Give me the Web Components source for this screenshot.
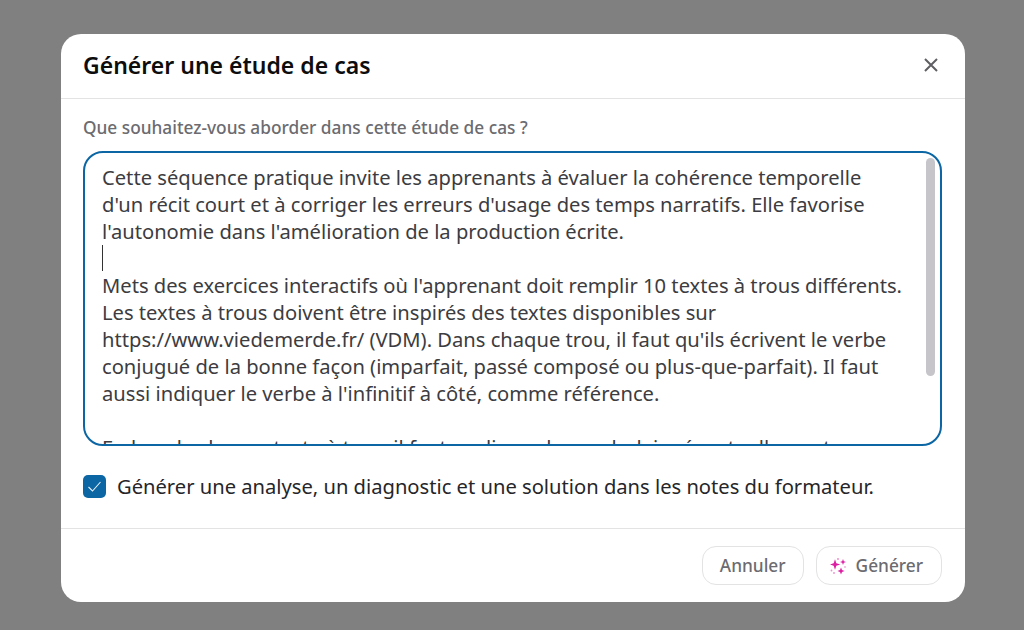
<!DOCTYPE html>
<html lang="fr">
<head>
<meta charset="utf-8">
<title>Générer une étude de cas</title>
<style>
    html, body { margin: 0; height: 100%; }
    body { font-family: "Noto Sans", sans-serif; background: #808080; overflow: hidden; }
</style>
</head>
<body>
<case-dialog>
    <span slot="title">Générer une étude de cas</span>
    <prompt-box label="Que souhaitez-vous aborder dans cette étude de cas ?">Cette séquence pratique invite les apprenants à évaluer la cohérence temporelle
d'un récit court et à corriger les erreurs d'usage des temps narratifs. Elle favorise
l'autonomie dans l'amélioration de la production écrite.
<span class="caret"></span>
Mets des exercices interactifs où l'apprenant doit remplir 10 textes à trous différents.
Les textes à trous doivent être inspirés des textes disponibles sur
https://www.viedemerde.fr/ (VDM). Dans chaque trou, il faut qu'ils écrivent le verbe
conjugué de la bonne façon (imparfait, passé composé ou plus-que-parfait). Il faut
aussi indiquer le verbe à l'infinitif à côté, comme référence.

En bas de chaque texte à trou, il faut expliquer le vocabulaire éventuellement</prompt-box>
    <check-row>Générer une analyse, un diagnostic et une solution dans les notes du formateur.</check-row>
    <action-button slot="actions">Annuler</action-button>
    <action-button slot="actions" sparkle>Générer</action-button>
</case-dialog>

<script>
class CaseDialog extends HTMLElement {
    constructor() {
        super();
        this.attachShadow({mode: "open"})
    }

    connectedCallback() {
        this.shadowRoot.innerHTML = `
            <style>
                :host {
                    display: block;
                    box-sizing: border-box;
                    height: 630px;
                    padding: 34px 59px 28px 61px;
                }
                #modal {
                    height: 568px;
                    background: #fff;
                    border-radius: 20px;
                    display: flex;
                    flex-direction: column;
                }
                header {
                    flex: none;
                    display: flex;
                    align-items: center;
                    justify-content: space-between;
                    padding: 0 26px 2px 22px;
                    border-bottom: 1px solid #e3e3e3;
                    font-size: 23px;
                    font-weight: 600;
                    color: #0d0d0d;
                    box-sizing: border-box;
                    height: 65px;
                }
                header svg { display: block; }
                main {
                    flex: 1;
                    padding: 19px 23px 0 22px;
                    display: flex;
                    flex-direction: column;
                }
                footer {
                    height: 74px;
                    flex: none;
                    box-sizing: border-box;
                    border-top: 1px solid #e3e3e3;
                    display: flex;
                    justify-content: flex-end;
                    gap: 12px;
                    padding: 17px 23px 0 0;
                }
            </style>
            <div id="modal">
                <header>
                    <slot name="title"></slot>
                    <svg width="16" height="16" viewBox="0 0 16 16" fill="none" stroke="#5f5f63" stroke-width="2">
                        <path d="M2 2 14 14M14 2 2 14"/>
                    </svg>
                </header>
                <main><slot></slot></main>
                <footer><slot name="actions"></slot></footer>
            </div>`
    }
}

class PromptBox extends HTMLElement {
    constructor() {
        super();
        this.attachShadow({mode: "open"})
    }

    connectedCallback() {
        this.shadowRoot.innerHTML = `
            <style>
                :host { display: block; }
                label {
                    display: block;
                    font-size: 17.28px;
                    font-weight: 500;
                    line-height: 20px;
                    color: #6b6b70;
                    margin-bottom: 13px;
                }
                #box {
                    position: relative;
                    box-sizing: border-box;
                    height: 295px;
                    border: 2px solid #0b66a3;
                    border-radius: 20px;
                    overflow: hidden;
                }
                #text {
                    padding: 11px 17px 0 17px;
                    font-size: 20.16px;
                    line-height: 27px;
                    color: #3c3c41;
                    white-space: pre;
                }
                ::slotted(.caret) {
                    display: inline-block;
                    width: 1px;
                    height: 26px;
                    background: #333;
                    vertical-align: top;
                }
                #thumb {
                    position: absolute;
                    top: 5px;
                    right: 5px;
                    width: 9px;
                    height: 218px;
                    border-radius: 5px;
                    background: #c5c5ca;
                }
            </style>
            <label>${this.getAttribute("label")}</label>
            <div id="box">
                <div id="text"><slot></slot></div>
                <div id="thumb"></div>
            </div>`
    }
}

class CheckRow extends HTMLElement {
    constructor() {
        super();
        this.attachShadow({mode: "open"})
    }

    connectedCallback() {
        this.shadowRoot.innerHTML = `
            <style>
                :host {
                    display: flex;
                    align-items: center;
                    gap: 11px;
                    margin-top: 29px;
                    font-size: 20.16px;
                    line-height: 23px;
                    color: #26262a;
                }
                #tick {
                    width: 23px;
                    height: 23px;
                    flex: none;
                    border-radius: 5px;
                    background: #0b66a3;
                    display: flex;
                    align-items: center;
                    justify-content: center;
                }
            </style>
            <span id="tick">
                <svg width="15" height="15" viewBox="0 0 15 15" fill="none" stroke="#fff" stroke-width="1.1" stroke-opacity=".9">
                    <path d="M1.5 8 5.5 12 13.5 3"/>
                </svg>
            </span>
            <span><slot></slot></span>`
    }
}

class ActionButton extends HTMLElement {
    constructor() {
        super();
        this.attachShadow({mode: "open"})
    }

    connectedCallback() {
        const icon = this.hasAttribute("sparkle") ? `
            <svg width="18" height="18" viewBox="0 0 18 18" fill="#dc1fa3">
                <path d="M5 2.2 6.3 6.2 10.3 7.5 6.3 8.8 5 12.8 3.7 8.8-.3 7.5 3.7 6.2Z"/>
                <path d="M13 2 13.8 4.2 16 5 13.8 5.8 13 8 12.2 5.8 10 5 12.2 4.2Z"/>
                <path d="M11 10.5 12 13 14.5 14 12 15 11 17.5 10 15 7.5 14 10 13Z"/>
                <circle cx="8" cy="2" r=".9" opacity=".55"/>
                <circle cx="15" cy="10" r=".8" opacity=".6"/>
                <circle cx="1.5" cy="13.5" r=".9" opacity=".5"/>
                <circle cx="4" cy="16" r=".9" opacity=".5"/>
            </svg>` : "";
        this.shadowRoot.innerHTML = `
            <style>
                :host {
                    display: inline-flex;
                    align-items: center;
                    gap: 8px;
                    box-sizing: border-box;
                    height: 39px;
                    padding: 0 17px;
                    background: #fff;
                    border: 1px solid #e3e3e3;
                    border-radius: 14px;
                    font-size: 17.3px;
                    font-weight: 500;
                    color: #6b6b70;
                }
                :host([sparkle]) { padding: 0 18px 0 13px; }
                svg { display: block; }
            </style>
            ${icon}<slot></slot>`
    }
}

customElements.define('case-dialog', CaseDialog);
customElements.define('prompt-box', PromptBox);
customElements.define('check-row', CheckRow);
customElements.define('action-button', ActionButton);
</script>
</body>
</html>
